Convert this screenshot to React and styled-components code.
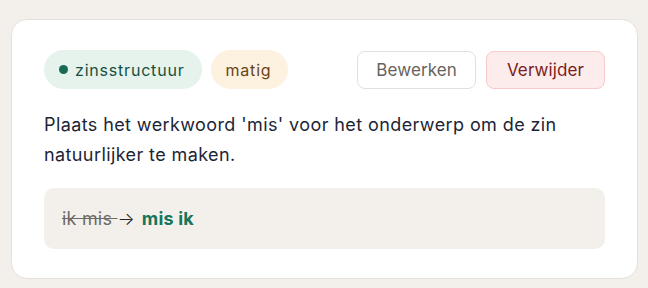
import React from "react"
import styled, { createGlobalStyle } from "styled-components"

const GlobalStyle = createGlobalStyle`
  body {
    margin: 0;
    background: #f3f0eb;
    font-family: "Inter", "Noto Sans", sans-serif;
  }
`

const Page = styled.div`
  padding: 19px 10px 8px 11px;
`

const Card = styled.div`
  background: #ffffff;
  border: 1px solid #e4e1dc;
  border-radius: 16px;
  padding: 30px 32px 29px 32px;
  display: grid;
`

const Header = styled.div`
  display: flex;
  align-items: center;
  justify-content: space-between;
`

const Tags = styled.div`
  display: flex;
  gap: 9px;
`

const Tag = styled.span`
  display: inline-flex;
  align-items: center;
  gap: 7px;
  height: 39px;
  padding: 0 17px 0 15px;
  border-radius: 999px;
  font-size: 16px;
  letter-spacing: 0.8px;
  background: ${p => p.$bg};
  color: ${p => p.$fg};
`

const Dot = styled.span`
  width: 9px;
  height: 9px;
  border-radius: 50%;
  background: #166b52;
`

const Actions = styled.div`
  display: flex;
  gap: 10px;
`

const Button = styled.button`
  height: 38px;
  padding: 0 ${p => (p.$danger ? "20px" : "18px")};
  border-radius: 8px;
  font-family: inherit;
  font-size: 17px;
  letter-spacing: 0.1px;
  cursor: pointer;
  border: 1px solid ${p => (p.$danger ? "#f7c9c9" : "#e3e0dc")};
  background: ${p => (p.$danger ? "#fdecec" : "#ffffff")};
  color: ${p => (p.$danger ? "#7b1d1d" : "#67625c")};
`

const Message = styled.p`
  margin: 21px 0 18px;
  font-size: 18px;
  line-height: 30px;
  letter-spacing: 0.4px;
  color: #1c2536;
`

const Example = styled.div`
  background: #f3f0eb;
  border-radius: 10px;
  height: 61px;
  padding: 0 18px;
  display: flex;
  align-items: center;
  font-size: 18px;
  letter-spacing: 0.2px;
  color: #222;
`

const Wrong = styled.span`
  color: #6d6a66;
  text-decoration: line-through;
`

const Arrow = styled.span`
  font-weight: 300;
`

const Right = styled.span`
  color: #17755a;
  font-weight: 700;
  margin-left: 7px;
`

export default function App() {
  return (
    <>
      <GlobalStyle />
      <Page>
        <Card>
          <Header>
            <Tags>
              <Tag $bg="#e5f3ec" $fg="#16503f">
                <Dot />
                zinsstructuur
              </Tag>
              <Tag $bg="#fdf1df" $fg="#6a4417">matig</Tag>
            </Tags>
            <Actions>
              <Button>Bewerken</Button>
              <Button $danger>Verwijder</Button>
            </Actions>
          </Header>
          <Message>
            Plaats het werkwoord 'mis' voor het onderwerp om de zin natuurlijker te maken.
          </Message>
          <Example>
            <Wrong>ik mis&nbsp;</Wrong>
            <Arrow>→</Arrow>
            <Right>mis ik</Right>
          </Example>
        </Card>
      </Page>
    </>
  )
}
